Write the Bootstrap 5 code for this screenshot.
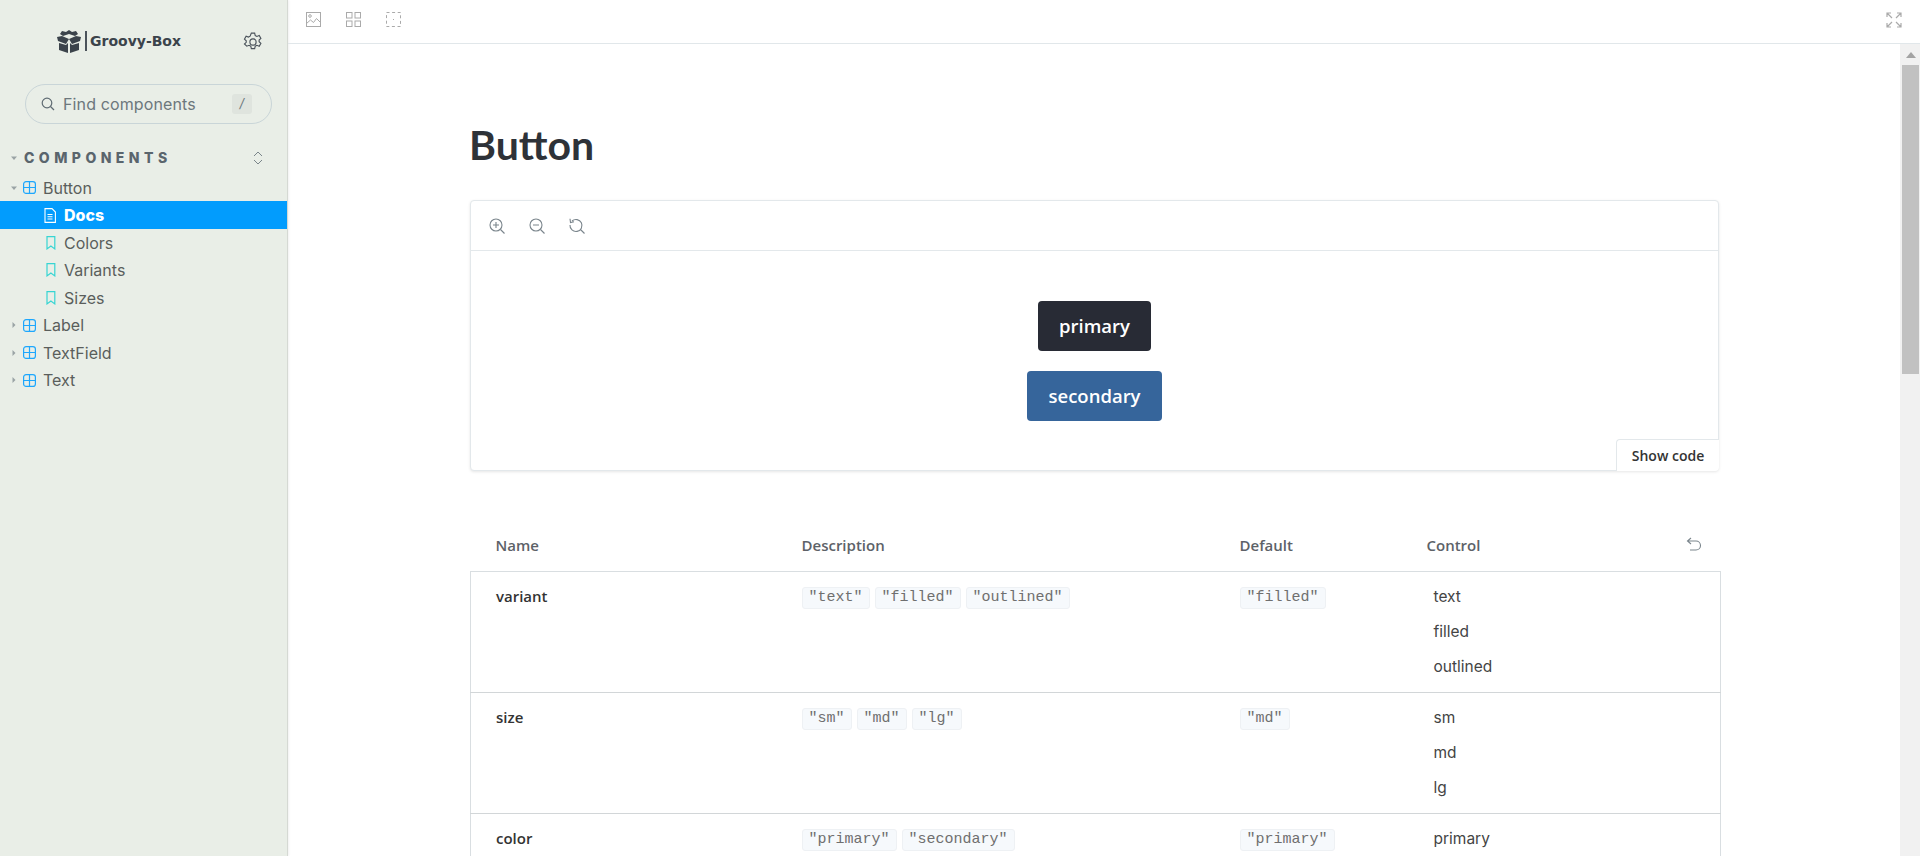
<!DOCTYPE html>
<html lang="en">
<head>
<meta charset="utf-8">
<title>Button</title>
<link href="https://cdn.jsdelivr.net/npm/bootstrap@5.3.0/dist/css/bootstrap.min.css" rel="stylesheet">
<style>
html,body{height:100%;overflow:hidden}
body{font-family:"Lato","Noto Sans",sans-serif;background:#fff;color:#2e3238}
.sb-side{width:288px;flex:none;background:#e9eee7;border-right:1px solid #d5d9d3;font-family:"Inter",sans-serif;color:#5a5e5c;font-size:16px;box-shadow:1px 0 2px rgba(0,0,0,.06)}
.sb-brand{height:84px;padding:29px 24px 0 56px}
.sb-logo{font-family:"DejaVu Sans",sans-serif;font-weight:700;font-size:14px;color:#3b434b;letter-spacing:0}
.sb-bar{width:2px;height:20px;background:#4b535b;margin:0 3px 0 3px}
.sb-gear{margin-top:3px}
.sb-search{height:40px;margin:0 15px 0 25px;border:1px solid #c9d5d8;border-radius:20px;padding:0 19px 0 15px;font-size:16px;color:#6c777c;letter-spacing:.12px}
.sb-key{width:20px;height:20px;background:#dfe4de;border-radius:3px;font-size:13px;font-style:italic;color:#6c777c}
.sb-head{height:33px;padding:0 24px 0 11px;margin-top:17px;font-size:14px;font-weight:800;letter-spacing:4.46px;color:#5a656d}
.sb-head .sb-caret{margin-right:7px}
.sb-row{height:27.5px;padding-left:11px}
.sb-comp{height:27px}
.sb-row.sb-sub{padding-left:46px}
.sb-active{background:#029cfd;color:#fff;font-weight:800;height:28px;padding-left:44px!important;position:relative}
.sb-caret{width:6px;height:8px;margin-right:6px;flex:none}
.sb-ic{margin-right:7px}
.sb-main{min-width:0}
.sb-top{height:44px;flex:none;border-bottom:1px solid #e1e7ea;padding:0 18px 4px 18px;gap:25px}
.sb-content{padding:0 181px 0 182px;min-width:0;overflow:hidden}
.sb-title{font-size:41px;line-height:48px;margin:0 0 0 -1px;padding-top:77px;height:156px;color:#2e3238;font-family:"Lato",sans-serif;font-weight:700}
.sb-card{height:271px;border:1px solid #e3e8eb;border-radius:4px;box-shadow:0 1px 3px rgba(0,0,0,.1)}
.sb-tools{height:50px;padding-left:18px;gap:24px;border-bottom:1px solid #e3e8eb}
.sb-stage{gap:20px;padding-top:50px}
.sb-btn{height:50px;border:0;border-radius:4px;color:#fff;font-family:"Open Sans",sans-serif;font-weight:600;font-size:18.5px;padding:0 21px}
.sb-btn-a{background:#282b35}
.sb-btn-a:hover{background:#282b35;color:#fff}
.sb-btn-b{background:#36659b}
.sb-btn-b:hover{background:#36659b;color:#fff}
.sb-code{position:absolute;right:-1px;bottom:-1px;width:103px;height:32px;background:#fff;border:1px solid #e3e8eb;border-bottom:0;border-right:0;border-radius:4px 0 4px 0;font-family:"Open Sans",sans-serif;font-size:14px;font-weight:600;color:#333}
.sb-table{width:1251px;table-layout:fixed;margin:59px 0 0 0;border-collapse:collapse;font-family:"Open Sans",sans-serif}
.sb-c1{width:331px}
.sb-c2{width:438px}
.sb-c3{width:187px}
.sb-table th{height:41px;padding:0 0 10px 0;vertical-align:middle;font-size:15px;font-weight:600;color:#5d6268;border:0;background:transparent}
.sb-table th:first-child,.sb-table td:first-child{padding-left:25px}
.sb-table tbody{border:1px solid #d9dee1}
.sb-table td{height:121px;padding:14px 0 0 0;vertical-align:top;border:0;border-bottom:1px solid #d2d6d8;background:transparent;font-size:15px;color:#333}
.sb-table td.sb-name{font-weight:600;padding-top:13px}
.sb-chip{font-family:"Liberation Mono",monospace;font-size:15px;line-height:20px;height:22px;padding:0 6px;margin-right:5px;margin-top:1px;background:#f6f9fc;border:1px solid #eef1f4;border-radius:3px;color:#6f6f6f;display:inline-block;vertical-align:top}
.sb-opt{height:35px;padding-left:7px;line-height:22px;font-family:"Inter",sans-serif;font-size:15.5px;color:#444}
.sb-ctrl{padding-right:19px}
.sb-undo{margin-top:3px}
.sb-track{width:20px;flex:none;background:#f1f1f1;padding:0 1px 0 2px}
.sb-arrow{height:21px}
.sb-thumb{height:309px;background:#c1c1c1}
svg{display:block;flex:none}
</style>
</head>
<body>
<div class="d-flex h-100">
  <aside class="sb-side d-flex flex-column">
    <div class="sb-brand d-flex align-items-start justify-content-between">
      <div class="d-flex align-items-center">
        <svg width="26" height="24" viewBox="0 0 26 24"><path fill="#3b434b" d="M13 1l3 2 4-1 2 3-3 2-6-2-6 2-3-2 2-3 4 1zM1 8l5-1 7 3-3 5-8-3zM25 8l-5-1-7 3 3 5 8-3zM3 14l7 2 2-2v10l-9-3zM23 14l-7 2-2-2v10l9-3z"/></svg>
        <span class="sb-bar"></span>
        <span class="sb-logo">Groovy-Box</span>
      </div>
      <svg class="sb-gear" width="20" height="20" viewBox="0 0 18 18" fill="none" stroke="#4a525a" stroke-width="1"><circle cx="9" cy="9" r="2.8"/><path d="M7.5 1h3l.5 2.2 1.5.8 2.1-.8 1.5 2.6-1.6 1.5v1.4l1.6 1.5-1.5 2.6-2.1-.8-1.5.8-.5 2.2h-3l-.5-2.2-1.500-.8-2.100.8L1.300 10.800l1.600-1.500V7.900L1.300 6.400l1.500-2.600 2.100.8 1.500-.8z"/></svg>
    </div>
    <div class="sb-search d-flex align-items-center">
      <svg width="14" height="14" viewBox="0 0 14 14" fill="none" stroke="#5f6b72" stroke-width="1.200"><circle cx="6" cy="6" r="4.800"/><path d="M9.500 9.500L13 13"/></svg>
      <span class="ms-2 flex-grow-1">Find components</span>
      <span class="sb-key d-flex align-items-center justify-content-center">/</span>
    </div>
    <div class="sb-head d-flex align-items-center">
      <svg class="sb-caret" viewBox="0 0 6 8"><path fill="#9aa3a5" d="M0 2.500h6L3 6z"/></svg>
      <span class="flex-grow-1">COMPONENTS</span>
      <svg width="10" height="14" viewBox="0 0 10 14" fill="none" stroke="#7a858a" stroke-width="1"><path d="M1 5l4-4 4 4M1 9l4 4 4-4"/></svg>
    </div>
    <div class="sb-row sb-comp d-flex align-items-center">
      <svg class="sb-caret" viewBox="0 0 6 8"><path fill="#9aa3a5" d="M0 2.500h6L3 6z"/></svg>
      <svg class="sb-ic" width="13" height="13" viewBox="0 0 13 13" fill="none" stroke="#1ea7fd" stroke-width="1.200"><rect x=".6" y=".6" width="11.800" height="11.800" rx="2.500"/><path d="M6.500 .6v11.800M.6 6.500h11.800"/></svg>
      <span>Button</span>
    </div>
    <div class="sb-row sb-active d-flex align-items-center">
      <svg class="me-2" width="12" height="15" viewBox="0 0 12 15" fill="none" stroke="#fff" stroke-width="1.100"><path d="M1 .6h7l3.400 3.400v10.400H1zM3.500 6.500h5M3.500 8.800h5M3.500 11h5"/></svg>
      <span>Docs</span>
    </div>
    <div class="sb-row sb-sub d-flex align-items-center">
      <svg class="me-2" width="10" height="14" viewBox="0 0 10 14" fill="none" stroke="#37d5d3" stroke-width="1.200"><path d="M1 .6h7.800v12.300L4.900 10 1 12.900z"/></svg>
      <span>Colors</span>
    </div>
    <div class="sb-row sb-sub d-flex align-items-center">
      <svg class="me-2" width="10" height="14" viewBox="0 0 10 14" fill="none" stroke="#37d5d3" stroke-width="1.200"><path d="M1 .6h7.800v12.300L4.900 10 1 12.900z"/></svg>
      <span>Variants</span>
    </div>
    <div class="sb-row sb-sub d-flex align-items-center">
      <svg class="me-2" width="10" height="14" viewBox="0 0 10 14" fill="none" stroke="#37d5d3" stroke-width="1.200"><path d="M1 .6h7.800v12.300L4.900 10 1 12.900z"/></svg>
      <span>Sizes</span>
    </div>
    <div class="sb-row d-flex align-items-center">
      <svg class="sb-caret" viewBox="0 0 6 8"><path fill="#9aa3a5" d="M1.500 1l3 3-3 3z"/></svg>
      <svg class="sb-ic" width="13" height="13" viewBox="0 0 13 13" fill="none" stroke="#1ea7fd" stroke-width="1.200"><rect x=".6" y=".6" width="11.800" height="11.800" rx="2.500"/><path d="M6.500 .6v11.800M.6 6.500h11.800"/></svg>
      <span>Label</span>
    </div>
    <div class="sb-row d-flex align-items-center">
      <svg class="sb-caret" viewBox="0 0 6 8"><path fill="#9aa3a5" d="M1.500 1l3 3-3 3z"/></svg>
      <svg class="sb-ic" width="13" height="13" viewBox="0 0 13 13" fill="none" stroke="#1ea7fd" stroke-width="1.200"><rect x=".6" y=".6" width="11.800" height="11.800" rx="2.500"/><path d="M6.500 .6v11.800M.6 6.500h11.800"/></svg>
      <span>TextField</span>
    </div>
    <div class="sb-row d-flex align-items-center">
      <svg class="sb-caret" viewBox="0 0 6 8"><path fill="#9aa3a5" d="M1.500 1l3 3-3 3z"/></svg>
      <svg class="sb-ic" width="13" height="13" viewBox="0 0 13 13" fill="none" stroke="#1ea7fd" stroke-width="1.200"><rect x=".6" y=".6" width="11.800" height="11.800" rx="2.500"/><path d="M6.500 .6v11.800M.6 6.500h11.800"/></svg>
      <span>Text</span>
    </div>
  </aside>

  <div class="sb-main flex-grow-1 d-flex flex-column">
    <div class="sb-top d-flex align-items-center">
      <svg width="15" height="15" viewBox="0 0 15 15" fill="none" stroke="#aaa" stroke-width="1"><rect x=".5" y=".5" width="14" height="14"/><circle cx="4" cy="4" r="1.300"/><path d="M.5 11.500l4-3.500 3 2.500 3-4 4 4"/></svg>
      <svg width="15" height="15" viewBox="0 0 15 15" fill="none" stroke="#aaa" stroke-width="1"><rect x=".5" y=".5" width="5.500" height="5.500"/><rect x="9" y=".5" width="5.500" height="5.500"/><rect x=".5" y="9" width="5.500" height="5.500"/><rect x="9" y="9" width="5.500" height="5.500"/></svg>
      <svg width="15" height="15" viewBox="0 0 15 15" fill="none" stroke="#aaa" stroke-width="1"><rect x=".5" y=".5" width="14" height="14" stroke-dasharray="3 2.600"/><path d="M7 7.500h1"/></svg>
      <svg class="ms-auto" width="16" height="16" viewBox="0 0 16 16" fill="none" stroke="#aaa" stroke-width="1.200"><path d="M1 1l5 5M15 1l-5 5M1 15l5-5M15 15l-5-5M1 5V1h4M11 1h4v4M1 11v4h4M11 15h4v-4"/></svg>
    </div>
    <div class="d-flex flex-grow-1 overflow-hidden">
      <main class="sb-content flex-grow-1">
        <h1 class="sb-title">Button</h1>
        <div class="sb-card card position-relative">
          <div class="sb-tools d-flex align-items-center">
            <svg width="16" height="16" viewBox="0 0 16 16" fill="none" stroke="#7a858c" stroke-width="1.100"><circle cx="7" cy="7" r="6"/><path d="M11.500 11.500L15.500 15.500M7 4v6M4 7h6"/></svg>
            <svg width="16" height="16" viewBox="0 0 16 16" fill="none" stroke="#7a858c" stroke-width="1.100"><circle cx="7" cy="7" r="6"/><path d="M11.500 11.500L15.500 15.500M4 7h6"/></svg>
            <svg width="16" height="16" viewBox="0 0 16 16" fill="none" stroke="#7a858c" stroke-width="1.100"><path d="M3 3a6 6 0 1 1-2 4M11.500 11.500L15.500 15.500M1 .8L1.500 4.500 5 3.800"/></svg>
          </div>
          <div class="sb-stage flex-grow-1 d-flex flex-column align-items-center justify-content-start">
            <button class="btn sb-btn sb-btn-a">primary</button>
            <button class="btn sb-btn sb-btn-b">secondary</button>
          </div>
          <button class="btn sb-code p-0">Show code</button>
        </div>
        <table class="table sb-table">
          <colgroup><col class="sb-c1"><col class="sb-c2"><col class="sb-c3"><col></colgroup>
          <thead>
            <tr><th>Name</th><th>Description</th><th>Default</th>
              <th><div class="d-flex justify-content-between sb-ctrl"><span>Control</span>
                <svg class="sb-undo" width="16" height="14" viewBox="0 0 16 14" fill="none" stroke="#7a858c" stroke-width="1.100"><path d="M5 1L1.500 4 5 7M1.500 4H10a4.500 4.500 0 0 1 0 9H4"/></svg></div></th></tr>
          </thead>
          <tbody>
            <tr>
              <td class="sb-name">variant</td>
              <td><span class="sb-chip">"text"</span><span class="sb-chip">"filled"</span><span class="sb-chip">"outlined"</span></td>
              <td><span class="sb-chip">"filled"</span></td>
              <td><div class="sb-opt">text</div><div class="sb-opt">filled</div><div class="sb-opt">outlined</div></td>
            </tr>
            <tr>
              <td class="sb-name">size</td>
              <td><span class="sb-chip">"sm"</span><span class="sb-chip">"md"</span><span class="sb-chip">"lg"</span></td>
              <td><span class="sb-chip">"md"</span></td>
              <td><div class="sb-opt">sm</div><div class="sb-opt">md</div><div class="sb-opt">lg</div></td>
            </tr>
            <tr>
              <td class="sb-name">color</td>
              <td><span class="sb-chip">"primary"</span><span class="sb-chip">"secondary"</span></td>
              <td><span class="sb-chip">"primary"</span></td>
              <td><div class="sb-opt">primary</div></td>
            </tr>
          </tbody>
        </table>
      </main>
      <div class="sb-track">
        <div class="sb-arrow d-flex align-items-center justify-content-center"><svg width="10" height="6" viewBox="0 0 10 6"><path fill="#a3a3a3" d="M5 0l5 6H0z"/></svg></div>
        <div class="sb-thumb"></div>
      </div>
    </div>
  </div>
</div>
</body>
</html>
